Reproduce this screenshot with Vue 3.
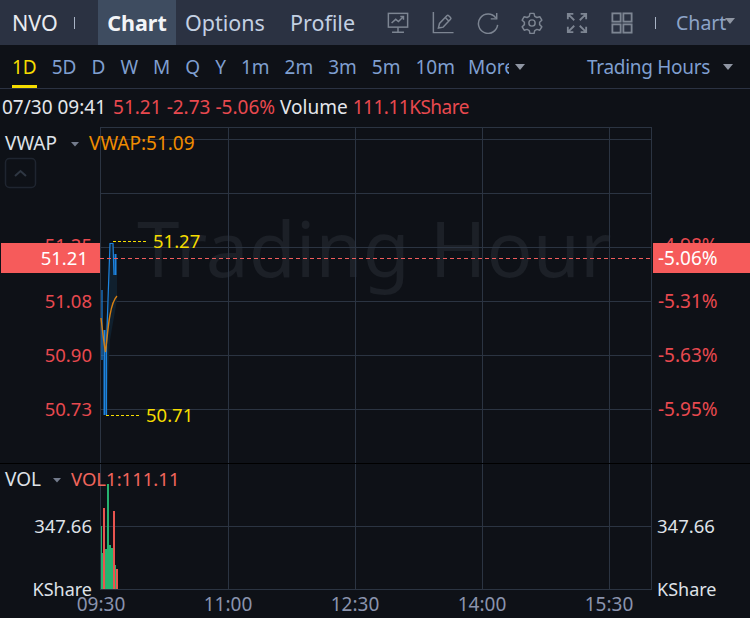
<template>
  <div class="page">
    <header class="topbar">
      <span class="symbol">NVO</span>
      <span class="sep"></span>
      <nav class="tabs">
        <span v-for="t in tabs" :key="t" class="tab" :class="{ active: t === 'Chart' }">{{ t }}</span>
      </nav>
      <div class="tools">
        <svg class="tool" viewBox="0 0 24 24" width="22" height="22" fill="none" stroke="currentColor" stroke-width="1.600">
          <rect x="1.500" y="1.500" width="21" height="15" />
          <path d="M5 12l4.500-4 3 2.500 5.500-5.500M14.500 5h3.500v3.500M12 16.500v5M5.500 22h13" />
        </svg>
        <svg class="tool" viewBox="0 0 24 24" width="22" height="22" fill="none" stroke="currentColor" stroke-width="1.600">
          <path d="M1.500 0v22.500h22" />
          <path d="M7 17.500l1.200-5 8-8.500q1-1 2 0l2 2q1 1 0 2l-8 8.500zM14.500 6l4 4" />
        </svg>
        <svg class="tool" viewBox="0 0 24 24" width="22" height="22" fill="none" stroke="currentColor" stroke-width="1.600">
          <path d="M20.500 6.500A10.500 10.500 0 1 0 22.500 14" />
          <path d="M21.500 1v6.500h-6.500" />
        </svg>
        <svg class="tool" viewBox="0 0 24 24" width="22" height="22" fill="none" stroke="currentColor" stroke-width="1.600" stroke-linejoin="round">
          <path d="M9.800 1.500h4.400l.8 3.200 2.300 1.300 3.200-.9 2.200 3.800-2.400 2.300v2.600l2.400 2.300-2.200 3.800-3.200-.9-2.300 1.300-.8 3.200H9.800l-.8-3.200-2.300-1.300-3.200.9-2.200-3.800 2.400-2.300v-2.600L1.300 8.900l2.200-3.800 3.200.9L9 4.700z" />
          <circle cx="12" cy="12" r="3.400" />
        </svg>
        <svg class="tool" viewBox="0 0 24 24" width="22" height="22" fill="none" stroke="currentColor" stroke-width="2">
          <path d="M2 8V2h6M2 2l7 7M16 2h6v6M22 2l-7 7M2 16v6h6M2 22l7-7M22 16v6h-6M22 22l-7-7" />
        </svg>
        <svg class="tool" viewBox="0 0 24 24" width="22" height="22" fill="none" stroke="currentColor" stroke-width="2">
          <rect x="1.500" y="1.500" width="9" height="9" />
          <rect x="13.500" y="1.500" width="9" height="9" />
          <rect x="1.500" y="13.500" width="9" height="9" />
          <rect x="13.500" y="13.500" width="9" height="9" />
        </svg>
      </div>
      <span class="sep sep-right"></span>
      <span class="chart-select">Chart<i class="caret"></i></span>
    </header>

    <div class="periods">
      <span
        v-for="p in periods"
        :key="p"
        class="period"
        :class="{ active: p === '1D' }"
      >{{ p }}</span>
      <span class="period more"><span class="more-text">More</span><i class="caret"></i></span>
      <span class="hours">Trading Hours<i class="caret"></i></span>
    </div>

    <div class="quote">
      <span class="time-now">07/30 09:41</span>
      <span class="red">51.21</span>
      <span class="red">-2.73</span>
      <span class="red">-5.06%</span>
      <span>Volume</span>
      <span class="red vol">111.11KShare</span>
    </div>

    <svg class="chart" width="750" height="493" viewBox="0 125 750 493">
      <text x="137" y="277" class="watermark">Trading Hour</text>

      <!-- grid -->
      <line v-for="x in gridX" :key="x" :x1="x" y1="128" :x2="x" y2="589" class="grid" />
      <line v-for="y in gridY" :key="y" x1="100" :y1="y" x2="652" :y2="y" class="grid" />
      <line x1="0" y1="463.500" x2="750" y2="463.500" class="divider" />

      <!-- price labels -->
      <text x="92" y="252" class="axis num red-fill" text-anchor="end">51.25</text>
      <text x="92" y="308" class="axis num red-fill" text-anchor="end">51.08</text>
      <text x="92" y="362" class="axis num red-fill" text-anchor="end">50.90</text>
      <text x="92" y="416" class="axis num red-fill" text-anchor="end">50.73</text>
      <text x="658" y="252" class="axis red-fill">-4.98%</text>
      <text x="658" y="308" class="axis red-fill">-5.31%</text>
      <text x="658" y="362" class="axis red-fill">-5.63%</text>
      <text x="658" y="416" class="axis red-fill">-5.95%</text>

      <!-- price line -->
      <path d="M104 415V345L108 300L110 243H113L114 275L116 255L117 275V300L110 340L106 415Z" class="area" />
      <path d="M102 360V290" class="price" />
      <path d="M104.500 415V330" class="price thick" />
      <path d="M106.500 415V345L108 300L110 243.500H113L114 275" class="price" />
      <path d="M115.500 275V254" class="price thick" />
      <path d="M101 318C102.500 330 104 345 105.500 352C107 340 108 325 110 315C112 304 114 299 117 296" class="vwap" />

      <!-- extremes -->
      <line x1="113" y1="241.500" x2="147" y2="241.500" class="mark" />
      <text x="153" y="248" class="axis num yellow">51.27</text>
      <line x1="106" y1="415.500" x2="140" y2="415.500" class="mark" />
      <text x="146" y="422" class="axis num yellow">50.71</text>

      <!-- current price -->
      <line x1="100" y1="258.500" x2="652" y2="258.500" class="current" />
      <rect x="1" y="243" width="99" height="30" class="tag" />
      <text x="88" y="265" class="axis num white" text-anchor="end">51.21</text>
      <rect x="653" y="243" width="97" height="30" class="tag" />
      <text x="658" y="265" class="axis white">-5.06%</text>

      <!-- legends -->
      <text x="5" y="150" class="axis light">VWAP</text>
      <path d="M71 142h8l-4 4.500z" class="arrow" />
      <text x="89" y="150" class="axis orange">VWAP:51.09</text>
      <rect x="5.500" y="158.500" width="30" height="29" rx="4" class="collapse" />
      <path d="M15 176l5.500-5 5.500 5" class="chevron" />

      <text x="5" y="486" class="axis light">VOL</text>
      <path d="M53 478h8l-4 4.500z" class="arrow" />
      <text x="71" y="486" class="axis num salmon">VOL1:111.11</text>

      <!-- volume bars -->
      <rect
        v-for="b in bars"
        :key="b.x"
        :x="b.x"
        :y="b.y"
        :width="b.w"
        :height="589 - b.y"
        :class="b.up ? 'bar-up' : 'bar-down'"
      />

      <text x="92" y="533" class="axis num light" text-anchor="end">347.66</text>
      <text x="92" y="596" class="axis light kshare" text-anchor="end">KShare</text>
      <text x="657" y="533" class="axis num light">347.66</text>
      <text x="657" y="596" class="axis light kshare">KShare</text>

      <text v-for="t in times" :key="t.label" :x="t.x" y="611" class="axis time" text-anchor="middle">{{ t.label }}</text>
    </svg>
  </div>
</template>

<script setup>
const tabs = ['Chart', 'Options', 'Profile']
const periods = ['1D', '5D', 'D', 'W', 'M', 'Q', 'Y', '1m', '2m', '3m', '5m', '10m']
const gridX = [100.5, 228.5, 355.5, 482.5, 609.5, 651.5]
const gridY = [127.5, 139.5, 193.5, 247.5, 301.5, 355.5, 409.5, 526.5, 589.5]
const times = [
  { label: '09:30', x: 101 },
  { label: '11:00', x: 228 },
  { label: '12:30', x: 355 },
  { label: '14:00', x: 482 },
  { label: '15:30', x: 609 }
]
const bars = [
  { x: 101, y: 526, w: 1, up: true },
  { x: 102, y: 553, w: 1, up: true },
  { x: 103, y: 508, w: 2, up: false },
  { x: 105, y: 549, w: 2, up: true },
  { x: 107, y: 484, w: 2, up: true },
  { x: 109, y: 545, w: 2, up: true },
  { x: 111, y: 548, w: 2, up: true },
  { x: 113, y: 511, w: 2, up: false },
  { x: 115, y: 565, w: 1, up: true },
  { x: 116, y: 569, w: 2, up: false }
]
</script>

<style>
html,
body {
  margin: 0;
  background: #0e1117;
}
</style>

<style scoped>
.page {
  width: 750px;
  height: 618px;
  overflow: hidden;
  background: #0e1117;
  font-family: "Noto Sans", "Open Sans", sans-serif;
  color: #e4e6eb;
}

.topbar {
  display: flex;
  align-items: center;
  height: 45px;
  background: #2b3242;
  padding-left: 12px;
}

.symbol {
  font-size: 21.500px;
  color: #e8ebf0;
  width: 62px;
}

.sep {
  width: 1px;
  height: 12px;
  background: #a9b4c6;
}

.tabs {
  display: flex;
  align-items: stretch;
  height: 100%;
  margin-left: 23px;
}

.tab {
  display: flex;
  align-items: center;
  padding: 0 9px;
  font-size: 21.500px;
  color: #c3d0e2;
}

.tab + .tab + .tab {
  margin-left: 7px;
}

.tab.active {
  background: #3e4c60;
  color: #f2f4f7;
  font-weight: 700;
  width: 78px;
  box-sizing: border-box;
  justify-content: center;
  padding: 0;
}

.tools {
  display: flex;
  gap: 22.800px;
  margin-left: 23px;
  color: #7d8592;
}

.tool {
  display: block;
}

.sep-right {
  margin-left: 22px;
}

.chart-select {
  display: flex;
  align-items: center;
  margin-left: 20px;
  font-size: 19.500px;
  color: #8da4c8;
}

.chart-select .caret {
  margin-left: -1px;
  margin-top: -4px;
}

.caret {
  display: inline-block;
  width: 0;
  height: 0;
  border-left: 5px solid transparent;
  border-right: 5px solid transparent;
  border-top: 6px solid #8f96a3;
}

.periods {
  display: flex;
  align-items: center;
  height: 43px;
  border-bottom: 1px solid #2b3242;
  padding-left: 12px;
  font-size: 19px;
  color: #7f9fd0;
}

.period {
  position: relative;
  display: flex;
  align-items: center;
  height: 100%;
  margin-right: 15px;
}

.period.active {
  color: #f5dc00;
}

.period.active::after {
  content: "";
  position: absolute;
  left: 0;
  right: 0;
  bottom: 0;
  height: 3px;
  background: #f5dc00;
}

.more {
  margin-left: -2px;
}

.more-text {
  width: 41px;
  overflow: hidden;
}

.more .caret {
  margin-left: 6px;
}

.hours {
  display: flex;
  align-items: center;
  margin-left: auto;
  margin-right: 17px;
  letter-spacing: -0.3px;
}

.hours .caret {
  margin-left: 13px;
}

.quote {
  display: flex;
  align-items: center;
  gap: 5px;
  height: 36px;
  padding-left: 2px;
  font-size: 19px;
  color: #e4e6eb;
}

.time-now {
  margin-right: 2px;
}

.red {
  color: #e8494f;
}

.vol {
  letter-spacing: -0.5px;
}

.chart {
  display: block;
}

.axis {
  font-size: 19px;
  font-family: "Noto Sans", "Open Sans", sans-serif;
}

.num {
  font-size: 18.500px;
}

.kshare {
  font-size: 18px;
}

.red-fill {
  fill: #e8494f;
}

.yellow {
  fill: #f5dc00;
}

.white {
  fill: #fff;
}

.light {
  fill: #dfe2e8;
}

.orange {
  fill: #f08c00;
}

.salmon {
  fill: #f0655c;
}

.time {
  fill: #8a93ad;
}

.watermark {
  font-size: 76.500px;
  font-family: "Noto Sans", "Open Sans", sans-serif;
  fill: #1c2027;
}

.grid {
  stroke: #2b3442;
  stroke-width: 1;
}

.divider {
  stroke: #000;
  stroke-width: 1;
}

.area {
  fill: #10202e;
}

.price {
  fill: none;
  stroke: #1d84e0;
  stroke-width: 1.200;
}

.price.thick {
  stroke-width: 2;
}

.vwap {
  fill: none;
  stroke: #d67f12;
  stroke-width: 1.400;
}

.mark {
  stroke: #f5dc00;
  stroke-width: 1;
  stroke-dasharray: 3 2;
}

.current {
  stroke: #f05c5c;
  stroke-width: 1;
  stroke-dasharray: 4 3;
}

.tag {
  fill: #f65b5b;
}

.arrow {
  fill: #737b8c;
}

.collapse {
  fill: none;
  stroke: #1f2530;
  stroke-width: 1.500;
}

.chevron {
  fill: none;
  stroke: #2f3743;
  stroke-width: 2;
}

.bar-up {
  fill: #26b36f;
}

.bar-down {
  fill: #e8544f;
}
</style>
